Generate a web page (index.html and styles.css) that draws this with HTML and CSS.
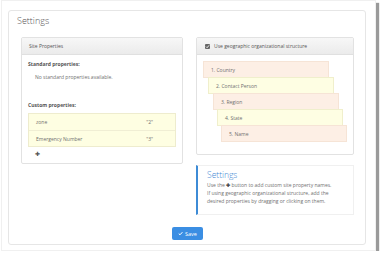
FILE: index.html
```html
<!DOCTYPE html>
<html>
<head>
<meta charset="utf-8">
<link rel="stylesheet" href="styles.css">
</head>
<body>
<div class="shot">
  <div class="card">
    <div class="card-title">Settings</div>
    <div class="card-body">
      <div class="cols">
        <div class="panel left">
          <div class="panel-head">Site Properties</div>
          <div class="panel-body">
            <div class="label">Standard properties:</div>
            <div class="muted indent">No standard properties available.</div>
            <div class="label custom">Custom properties:</div>
            <div class="props">
              <div class="prop"><span>zone</span><span>"2"</span></div>
              <div class="prop"><span>Emergency Number</span><span>"3"</span></div>
            </div>
            <div class="plus">✚</div>
          </div>
        </div>
        <div class="rightcol">
          <div class="panel right">
            <div class="panel-head geo">
              <span class="chk"><svg viewBox="0 0 10 10" width="5" height="5"><path d="M2 5.2 L4.2 7.4 L8.2 2.6" fill="none" stroke="#fff" stroke-width="1.8"/></svg></span>
              <span>Use geographic organizational structure</span>
            </div>
            <div class="panel-body levels">
              <div class="lvl peach l1">1. Country</div>
              <div class="lvl yellow l2">2. Contact Person</div>
              <div class="lvl peach l3">3. Region</div>
              <div class="lvl yellow l4">4. State</div>
              <div class="lvl peach l5">5. Name</div>
            </div>
          </div>
          <div class="info">
            <div class="info-title">Settings</div>
            <div class="info-text">Use the <b class="mini">✚</b> button to add custom site property names.<br>If using geographic organizational structure, add the<br>desired properties by dragging or clicking on them.</div>
          </div>
        </div>
      </div>
      <div class="actions">
        <button class="save"><svg viewBox="0 0 10 10" width="5" height="5"><path d="M1.5 5.2 L4 7.6 L8.8 2.4" fill="none" stroke="#fff" stroke-width="2"/></svg>Save</button>
      </div>
    </div>
  </div>
</div>
</body>
</html>
```

FILE: styles.css
```css
* { box-sizing: border-box; }
html, body { margin: 0; padding: 0; background: #fff; }
body { font-family: "Open Sans", "Liberation Sans", sans-serif; color: #666; }

.shot {
  width: 375px;
  height: 251px;
  margin-left: 1px;
  background: #fff;
  border: 1px solid #f0f0f0;
  box-shadow: 3px 3px 1px #9a9a9a;
  padding: 9px 0 0 6px;
}

.card {
  width: 358px;
  height: 235px;
  border: 1px solid #e6e6e6;
  border-radius: 3px;
}

.card-title {
  font-size: 9px;
  font-weight: 300;
  color: #555;
  padding: 4px 0 0 8px;
  height: 26px;
  line-height: 12px;
}

.card-body { padding: 0 11px 0 12px; }

.cols { display: flex; gap: 13px; align-items: flex-start; }

.panel {
  border: 1px solid #e2e2e2;
  border-radius: 2px;
  background: #fff;
}
.panel.left { width: 162px; height: 127px; }
.rightcol { width: 158px; display: flex; flex-direction: column; gap: 10px; }
.panel.right { height: 118px; }

.panel-head {
  height: 17px;
  background: linear-gradient(#f7f7f7, #ebebeb);
  border-bottom: 1px solid #e0e0e0;
  font-size: 5px;
  color: #555;
  line-height: 16px;
  padding-left: 7px;
}
.panel-head.geo { display: flex; align-items: center; gap: 4px; padding-left: 8px; }
.chk {
  width: 5px; height: 5px;
  background: #666;
  border-radius: 1px;
  display: flex;
}

.panel-body { padding: 5px 6px 0 6px; font-size: 5px; }
.label { font-weight: 700; color: #555; line-height: 8px; }
.muted { color: #707070; line-height: 8px; }
.indent { padding-left: 7px; margin-top: 5px; }
.custom { margin-top: 20px; }

.props {
  margin-top: 4px;
  border: 1px solid #eeecce;
  background: #fefee2;
}
.prop {
  display: flex;
  justify-content: space-between;
  height: 16px;
  line-height: 16px;
  padding: 0 22px 0 7px;
  color: #707070;
}
.prop + .prop { border-top: 1px solid #f0eed4; }

.plus { font-size: 6px; color: #555; padding-left: 7px; line-height: 14px; }

.levels { padding: 6px 0 0 6px; }
.lvl {
  width: 126px;
  height: 17px;
  line-height: 16px;
  font-size: 5px;
  color: #707070;
  padding-left: 7px;
}
.lvl + .lvl { margin-top: -1px; }
.peach { background: #fdefe5; border: 1px solid #f6e4d6; }
.yellow { background: #fefee3; border: 1px solid #f0efcc; }
.l2 { margin-left: 5px; }
.l3 { margin-left: 10px; }
.l4 { margin-left: 14px; }
.l5 { margin-left: 18px; }

.info {
  height: 50px;
  border: 1px solid #f0f0f0;
  border-left: 2px solid #3d8bd6;
  padding: 3px 0 0 9px;
}
.info-title { font-size: 8.5px; font-weight: 300; color: #3f8ad4; line-height: 12px; }
.info-text { font-size: 5px; color: #707070; line-height: 8px; }
.mini { color: #444; font-size: 5px; }

.actions { display: flex; justify-content: center; padding-top: 12px; }
.save {
  width: 31px; height: 13px;
  border: 0; border-radius: 2px;
  background: #3b8ee3;
  color: #fff;
  font-family: "Open Sans", "Liberation Sans", sans-serif;
  font-size: 5.5px;
  display: flex; align-items: center; justify-content: center; gap: 2px;
  padding: 0;
}
```
